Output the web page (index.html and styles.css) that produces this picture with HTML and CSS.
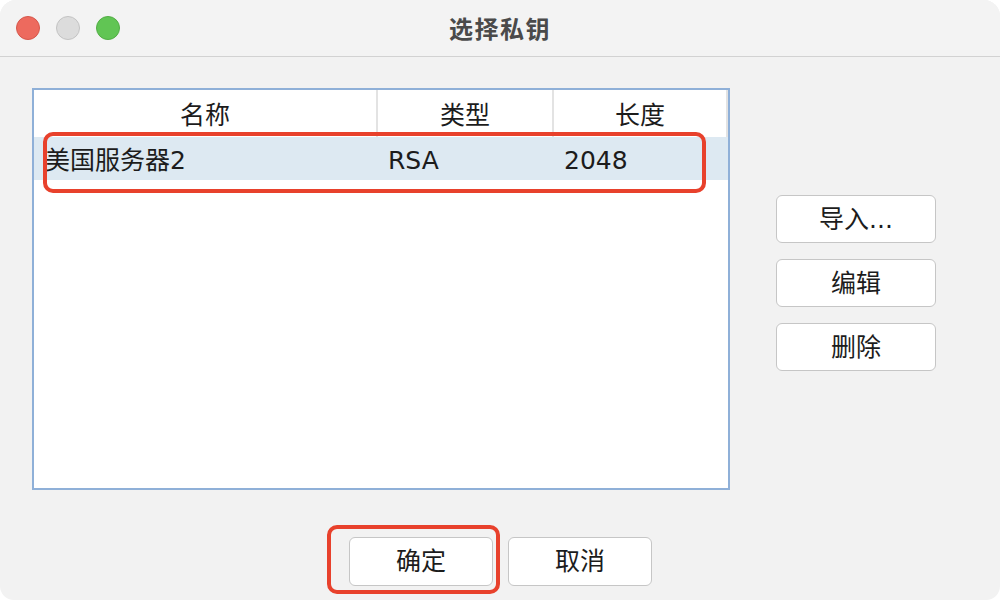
FILE: index.html
```html
<!DOCTYPE html>
<html lang="zh-CN">
<head>
<meta charset="utf-8">
<link rel="stylesheet" href="styles.css">
</head>
<body>
<div class="window">
  <div class="titlebar">
    <div class="lights">
      <span class="light red"></span>
      <span class="light gray"></span>
      <span class="light green"></span>
    </div>
    <div class="title">选择私钥</div>
  </div>
  <div class="main">
    <div class="table">
      <div class="thead">
        <div class="th c1">名称</div>
        <div class="th c2">类型</div>
        <div class="th c3">长度</div>
      </div>
      <div class="row selected">
        <div class="td c1 first">美国服务器2</div>
        <div class="td c2">RSA</div>
        <div class="td c3">2048</div>
      </div>
    </div>
    <div class="side">
      <button class="btn side-btn">导入...</button>
      <button class="btn side-btn">编辑</button>
      <button class="btn side-btn">删除</button>
    </div>
  </div>
  <div class="footer">
    <button class="btn foot-btn">确定</button>
    <button class="btn foot-btn">取消</button>
  </div>
  <div class="mark mark-row"></div>
  <div class="mark mark-ok"></div>
</div>
</body>
</html>
```
FILE: styles.css
```css
* { box-sizing: border-box; }
html, body { margin: 0; padding: 0; background: #ffffff; }
body {
  width: 1000px;
  height: 600px;
  font-family: "DejaVu Sans", "Noto Sans CJK SC", sans-serif;
  color: #1c1c1c;
}
.window {
  position: relative;
  width: 1000px;
  height: 600px;
  background: #f2f2f2;
  border-radius: 16px 16px 14px 14px;
  overflow: hidden;
}
.titlebar {
  position: relative;
  height: 57px;
  border-bottom: 1px solid #d2d2d2;
  background: #f3f3f3;
  display: flex;
  align-items: center;
  justify-content: center;
}
.lights {
  position: absolute;
  left: 16px;
  top: 16px;
  display: flex;
  gap: 16px;
}
.light {
  width: 24px;
  height: 24px;
  border-radius: 50%;
  display: block;
}
.red { background: #ed6a5e; border: 1px solid #d5574b; }
.gray { background: #dcdcdc; border: 1px solid #c3c3c3; }
.green { background: #61c554; border: 1px solid #52ad45; }
.title {
  font-family: "Noto Sans CJK SC", sans-serif;
  font-size: 24px;
  font-weight: 700;
  color: #4a4a4a;
  letter-spacing: 1.5px;
  margin-top: -2px;
}
.main {
  display: flex;
  padding: 31px 0 0 32px;
}
.table {
  width: 698px;
  height: 402px;
  border: 2px solid #8fb0d8;
  background: #ffffff;
}
.thead {
  display: flex;
  height: 47px;
}
.th {
  font-family: "Noto Sans CJK SC", sans-serif;
  font-size: 25px;
  text-align: center;
  line-height: 47px;
  border-right: 2px solid #e3e3e3;
}
.c1 { width: 344px; }
.c2 { width: 176px; }
.c3 { width: 174px; }
.row {
  display: flex;
  height: 43px;
}
.selected { background: #dde9f2; }
.td {
  font-size: 25px;
  padding: 5px 0 0 10px;
  line-height: 38px;
}
.td.first { padding-left: 11px; }
.side {
  display: flex;
  flex-direction: column;
  gap: 16px;
  margin-left: 46px;
  padding-top: 107px;
}
.btn {
  font-family: "DejaVu Sans", "Noto Sans CJK SC", sans-serif;
  font-size: 25px;
  color: #1c1c1c;
  background: #ffffff;
  border: 1.5px solid #c6c6c6;
  border-radius: 6px;
  padding: 0;
  line-height: 1;
}
.side-btn {
  width: 160px;
  height: 48px;
}
.footer {
  display: flex;
  justify-content: center;
  gap: 15px;
  margin-top: 47px;
  padding-left: 1px;
}
.foot-btn {
  width: 144px;
  height: 49px;
}
.mark {
  position: absolute;
  border: 4px solid #e8412c;
  border-radius: 10px;
}
.mark-row {
  left: 43px;
  top: 132px;
  width: 663px;
  height: 61px;
}
.mark-ok {
  left: 327px;
  top: 525px;
  width: 173px;
  height: 69px;
}
```
